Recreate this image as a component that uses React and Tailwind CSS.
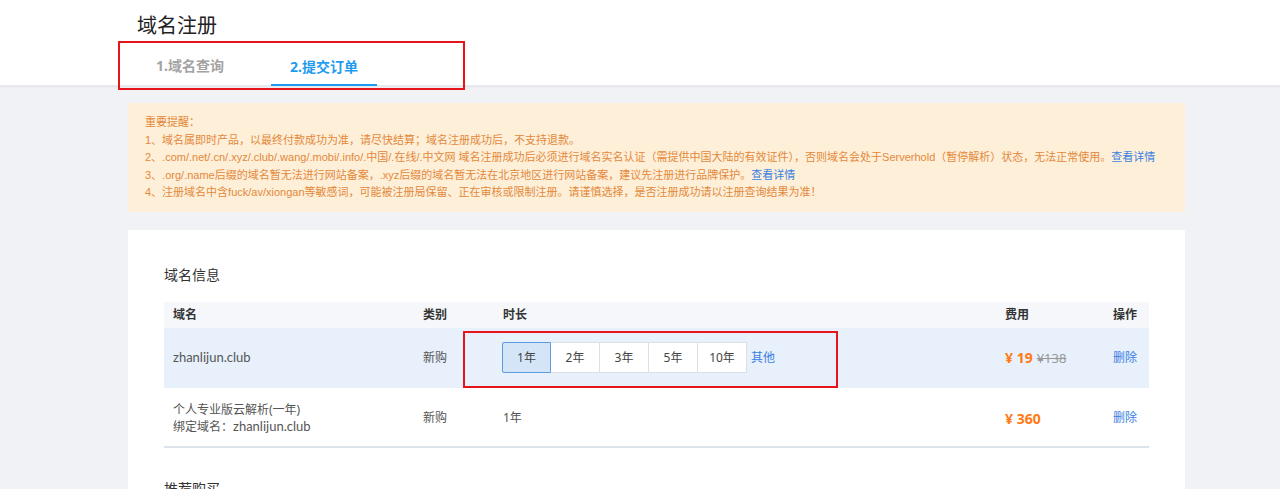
import React, { useState } from 'react';

const years = ['1年', '2年', '3年', '5年', '10年'];
const priceFont = { fontFamily: '"Noto Sans", sans-serif' };

export default function App() {
  const [year, setYear] = useState('1年');

  return (
    <div
      className="min-h-screen bg-[#F0F2F5] text-[#333]"
      style={{ fontFamily: '"Noto Sans", "Noto Sans CJK SC", sans-serif' }}
    >
      {/* Header with step tabs */}
      <header className="bg-white h-[86px] shadow-[0_1px_3px_rgba(0,0,0,0.06)] border-b border-[#e6e9ee]">
        <h1 className="pl-[137px] pt-[12px] text-[20px] leading-[28px] text-[#222]">域名注册</h1>
        <div className="ml-[118px] mt-[1px] w-[347px] h-[49px] border-2 border-[#E8141B] flex pl-[17px]">
          <div className="w-[106px] h-full flex items-center justify-center pb-[1px] text-[14px] font-bold text-[#a3a3a3]">
            1.域名查询
          </div>
          <div className="ml-[28px] w-[106px] h-full flex flex-col items-center justify-end">
            <span className="text-[14px] font-bold text-[#1E9BF0] leading-[20px]">2.提交订单</span>
            <span className="mt-[7px] mb-[2px] w-full h-[2px] bg-[#1E9BF0]" />
          </div>
        </div>
      </header>

      <div className="ml-[128px] w-[1057px] pt-[17px]">
        {/* Notice */}
        <div
          className="bg-[#FEEFD9] pl-[17px] pt-[11px] pb-[10px] text-[11px] leading-[17.6px] text-[#E3893A]"
          style={{ fontFamily: '"Liberation Sans", "Noto Sans CJK SC", sans-serif' }}
        >
          <p>重要提醒：</p>
          <p>1、域名属即时产品，以最终付款成功为准，请尽快结算；域名注册成功后，不支持退款。</p>
          <p>
            2、.com/.net/.cn/.xyz/.club/.wang/.mobi/.info/.中国/.在线/.中文网 域名注册成功后必须进行域名实名认证（需提供中国大陆的有效证件），否则域名会处于Serverhold（暂停解析）状态，无法正常使用。
            <a className="text-[#3B7FE0]">查看详情</a>
          </p>
          <p>
            3、.org/.name后缀的域名暂无法进行网站备案，.xyz后缀的域名暂无法在北京地区进行网站备案，建议先注册进行品牌保护。
            <a className="text-[#3B7FE0]">查看详情</a>
          </p>
          <p>4、注册域名中含fuck/av/xiongan等敏感词，可能被注册局保留、正在审核或限制注册。请谨慎选择，是否注册成功请以注册查询结果为准！</p>
        </div>

        {/* Order card */}
        <div className="mt-[18px] bg-white pl-[36px] pr-[36px] pt-[34px] pb-[40px]">
          <h2 className="text-[14px] leading-[22px] text-[#333]">域名信息</h2>

          <div className="relative mt-[16px] text-[12px]">
            <div className="grid grid-cols-[250px_80px_1fr_108px_45px] h-[26px] items-center bg-[#F5F7FA] font-bold text-[#333]">
              <div className="pl-[9px]">域名</div>
              <div className="pl-[9px]">类别</div>
              <div className="pl-[9px]">时长</div>
              <div className="pl-[9px]">费用</div>
              <div className="pl-[9px]">操作</div>
            </div>

            <div className="grid grid-cols-[250px_80px_1fr_108px_45px] h-[60px] items-center bg-[#E8F0FB] text-[#555]">
              <div className="pl-[9px] text-[13px]" style={{ fontFamily: 'Lato, "Noto Sans CJK SC", sans-serif' }}>zhanlijun.club</div>
              <div className="pl-[9px]">新购</div>
              <div className="pl-[8px] flex items-center">
                {years.map((y) => (
                  <button
                    key={y}
                    onClick={() => setYear(y)}
                    className={
                      y === year
                        ? 'w-[49px] h-[31px] border border-[#5A9BE2] bg-[#D5E5F8] text-[#444] rounded-l-[2px]'
                        : 'w-[49px] h-[31px] border border-l-0 border-[#dcdfe4] bg-white text-[#444]'
                    }
                  >
                    {y}
                  </button>
                ))}
                <a className="ml-[4px] text-[#3B7FE0]">其他</a>
              </div>
              <div className="pl-[9px] flex items-baseline gap-[4px]">
                <span className="text-[14px] font-bold text-[#FF7A12]" style={priceFont}>¥ 19</span>
                <span className="text-[13px] text-[#999] line-through" style={priceFont}>¥138</span>
              </div>
              <div className="pl-[9px] text-[#3B7FE0]">删除</div>
            </div>

            <div className="grid grid-cols-[250px_80px_1fr_108px_45px] h-[60px] pt-[3px] items-center bg-white text-[#555] border-b-2 border-[#DDE3EA]">
              <div className="pl-[9px] leading-[17px]">
                <div>个人专业版云解析(一年)</div>
                <div>
                  绑定域名：<span className="text-[13px]" style={{ fontFamily: 'Lato, sans-serif' }}>zhanlijun.club</span>
                </div>
              </div>
              <div className="pl-[9px]">新购</div>
              <div className="pl-[9px]">1年</div>
              <div className="pl-[9px]">
                <span className="text-[14px] font-bold text-[#FF7A12]" style={priceFont}>¥ 360</span>
              </div>
              <div className="pl-[9px] text-[#3B7FE0]">删除</div>
            </div>

            {/* annotation box around the duration picker */}
            <div className="absolute left-[299px] top-[29px] w-[375px] h-[57px] border-2 border-[#E8141B] pointer-events-none" />
          </div>

          <h2 className="mt-[30px] text-[14px] leading-[22px] text-[#333]">推荐购买</h2>
        </div>
      </div>
    </div>
  );
}
